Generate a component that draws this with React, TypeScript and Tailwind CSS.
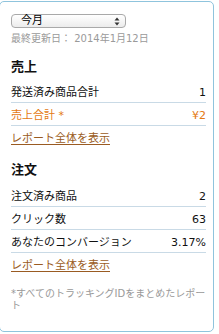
const font = { fontFamily: '"DejaVu Sans", "Noto Sans CJK JP", sans-serif' };

function Row({ label, value, orange }: { label: string; value: string; orange?: boolean }) {
  return (
    <div
      className={`flex justify-between border-b border-[#c9dae6] pt-[6px] pb-[3px] text-[11px] leading-[13px] ${
        orange ? 'text-[#e47911]' : 'text-[#111]'
      }`}
    >
      <span>{label}</span>
      <span>{value}</span>
    </div>
  );
}

function ReportLink() {
  return (
    <div className="mt-[6px] text-[11px] leading-[13px]">
      <a href="#" className="text-[#9a5b22] underline underline-offset-2">
        レポート全体を表示
      </a>
    </div>
  );
}

export default function App() {
  return (
    <div className="w-[219px] h-[334px] overflow-hidden bg-white" style={font}>
      <div className="-ml-px mt-px w-[215px] h-[331px] rounded-[5px] border border-[#8fc4dd] pt-[12px] pl-[11px] pr-[7px]">
        {/* period selector */}
        <div className="flex items-center justify-between w-[115px] h-[14px] rounded-[4px] border border-[#a9a9a9] bg-gradient-to-b from-white to-[#ececec] pl-[9px] pr-[5px]">
          <span className="text-[11px] leading-[12px] text-black">今月</span>
          <svg width="6" height="9" viewBox="0 0 6 9">
            <path d="M3 0.5 L5.5 3.5 H0.5 Z" fill="#333" />
            <path d="M3 8.5 L5.5 5.5 H0.5 Z" fill="#333" />
          </svg>
        </div>
        <div className="mt-[5px] text-[10px] leading-[12px] text-[#9a9a9a]">最終更新日： 2014年1月12日</div>

        <div className="mt-[14px] text-[13px] leading-[16px] font-bold text-[#111]">売上</div>
        <div className="mt-[5px]">
          <Row label="発送済み商品合計" value="1" />
          <Row label="売上合計 *" value="¥2" orange />
        </div>
        <ReportLink />

        <div className="mt-[17px] text-[13px] leading-[16px] font-bold text-[#111]">注文</div>
        <div className="mt-[6px]">
          <Row label="注文済み商品" value="2" />
          <Row label="クリック数" value="63" />
          <Row label="あなたのコンバージョン" value="3.17%" />
        </div>
        <ReportLink />

        <p className="mt-[16px] text-[10px] leading-[12px] text-[#999]">*すべてのトラッキングIDをまとめたレポート</p>
      </div>
    </div>
  );
}
